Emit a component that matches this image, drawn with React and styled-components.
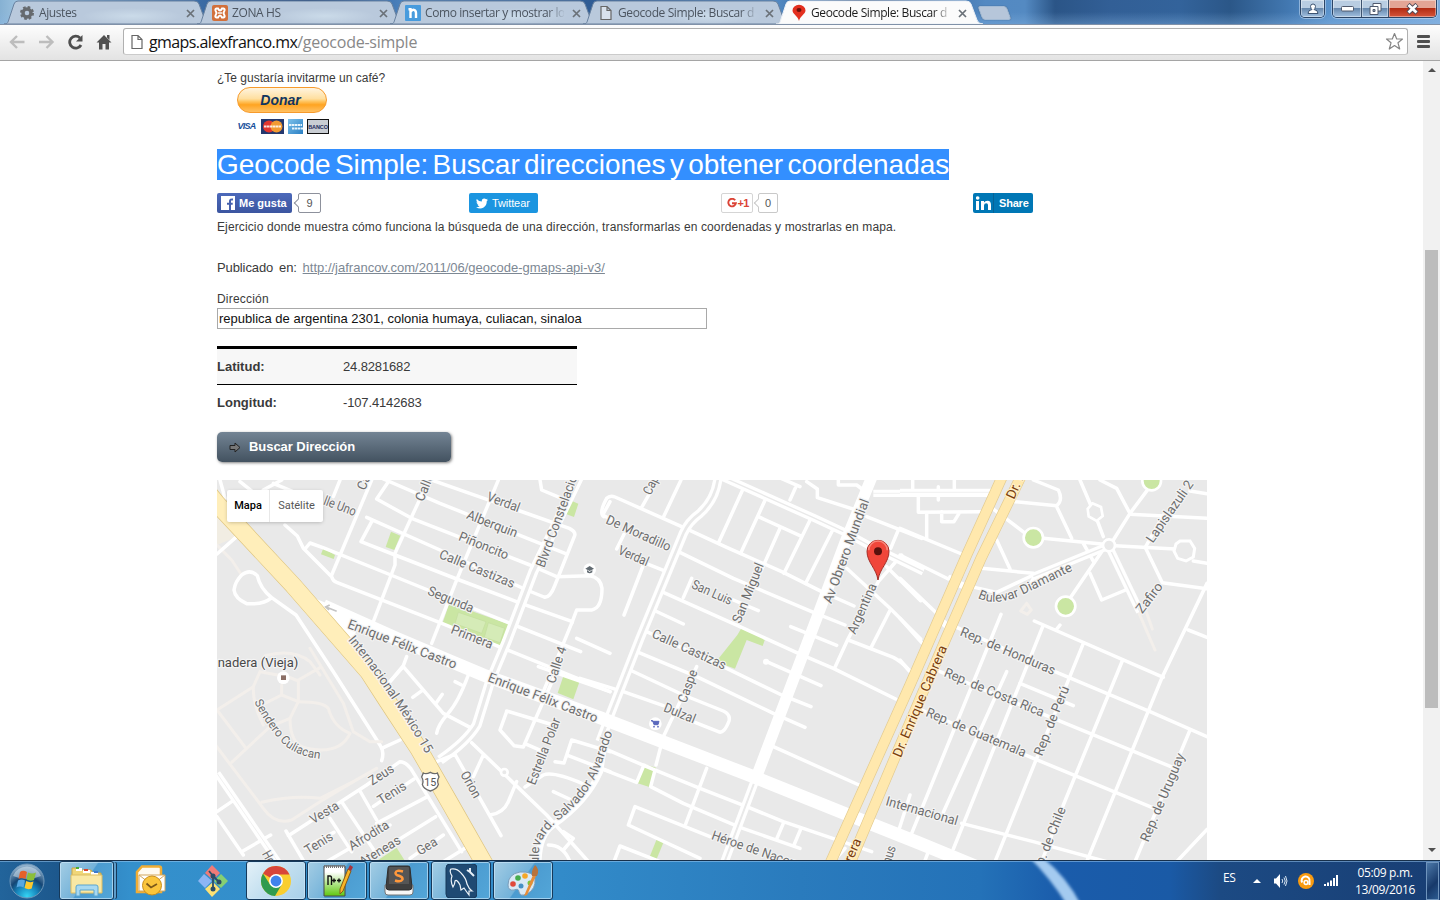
import React from "react";
import styled, { createGlobalStyle } from "styled-components";

const Global = createGlobalStyle`
  * { box-sizing: border-box; }
  html, body { margin: 0; height: 100%; overflow: hidden; background: #fff; }
  svg { display: block; flex: none; }
`;

const ui = '"Open Sans", "Noto Sans", sans-serif';
const arial = '"Liberation Sans", Arial, sans-serif';

const Screen = styled.div`
  width: 1440px;
  height: 900px;
  display: flex;
  flex-direction: column;
  overflow: hidden;
  background: #fff;
`;

/* ---------- browser frame ---------- */

const TabStrip = styled.div`
  height: 24px;
  flex: none;
  display: flex;
  padding-left: 4px;
  background:
    linear-gradient(180deg, transparent 50%, rgba(140, 185, 230, 0.35)),
    linear-gradient(90deg, #86b1d3 0, #9fc4e0 20px, #3c6ca5 200px, #1e4379 310px, #4a80bb 400px,
      #2f5c94 590px, #5187c0 780px, #1d4172 860px, #5389c2 985px, #548ac2 1025px, #2b5587 1055px,
      #325f96 1110px, #33639b 1180px, #2b5788 1230px, #4379b2 1290px, #5b93cc 1330px, #7cabdc 1440px);
`;

const TabBox = styled.div`
  width: 207px;
  height: 24px;
  margin-right: -14px;
  display: grid;
  flex: none;
  position: relative;
  z-index: ${(p) => (p.$active ? 2 : 1)};
  > * { grid-area: 1 / 1; }
`;

const TabContent = styled.div`
  display: flex;
  align-items: center;
  padding: 2px 16px 0 15px;
  color: ${(p) => (p.$active ? "#1c1c1c" : "#4c5560")};
  > svg:last-child { margin-left: 8px; }
`;

const TabTitle = styled.span`
  flex: 1;
  width: 0;
  margin-left: 4px;
  overflow: hidden;
  white-space: nowrap;
  font: 12px/16px ${ui};
  letter-spacing: -0.4px;
  mask-image: linear-gradient(90deg, #000 88%, transparent 101%);
`;

const NewTab = styled.div`
  width: 29px;
  height: 14px;
  margin: 6px 0 0 11px;
  transform: skewX(20deg);
  border: 1px solid #a3bbd5;
  border-radius: 3px;
  background: #b6c6da;
  box-shadow: 0 0 1px #28486d;
`;

const WindowControls = styled.div`
  display: flex;
  margin-left: auto;
  padding-right: 3px;
  height: 18px;
`;

const ControlGroup = styled.div`
  display: flex;
  height: 18px;
  margin-left: 7px;
  overflow: hidden;
  border: 1px solid #2c4566;
  border-top: 0;
  border-radius: 0 0 5px 5px;
  box-shadow: 0 0 0 1px rgba(200, 222, 245, 0.55);
`;

const Control = styled.div`
  width: ${(p) => p.$w}px;
  display: flex;
  justify-content: center;
  align-items: center;
  border-left: ${(p) => (p.$first ? 0 : 1)}px solid #3d536f;
  box-shadow: inset 0 0 0 1px rgba(255, 255, 255, 0.4);
  background: ${(p) =>
    p.$close
      ? "linear-gradient(#e3a595 0 45%, #b32c13 50%, #d5553b)"
      : "linear-gradient(#b9cde2 0 45%, #6788ad 50%, #a1c0e0)"};
`;

const Toolbar = styled.div`
  height: 37px;
  flex: none;
  display: flex;
  align-items: center;
  padding: 0 9px 2px 9px;
  border-top: 1px solid #8091a8;
  border-bottom: 1px solid #a5a5a5;
  background: linear-gradient(#fdfdfd, #e3e3e3);
`;

const NavIcons = styled.div`
  display: flex;
  width: 114px;
  gap: 12px;
`;

const AddressBar = styled.div`
  flex: 1;
  height: 27px;
  display: flex;
  align-items: center;
  padding: 0 3px 0 5px;
  border: 1px solid #b0b0b0;
  border-bottom-color: #cbcbcb;
  border-radius: 3px;
  background: #fff;
`;

const Url = styled.span`
  flex: 1;
  margin: 1px 0 0 4px;
  font: 16px/22px ${ui};
  letter-spacing: -0.25px;
  color: #888;
  b { font-weight: 400; color: #111; letter-spacing: -0.6px; }
`;

const MenuIcon = styled.div`
  width: 13px;
  height: 13px;
  margin-left: 9px;
  margin-right: 1px;
  display: flex;
  flex-direction: column;
  justify-content: space-between;
  i { height: 3px; border-radius: 1px; background: #505050; }
`;

/* ---------- page ---------- */

const Viewport = styled.div`
  flex: 1;
  min-height: 0;
  display: flex;
`;

const Page = styled.main`
  width: 1423px;
  padding-left: 217px;
  overflow: hidden;
  font: 12px/18px ${arial};
  color: #3a3a3a;
`;

const Scrollbar = styled.div`
  width: 17px;
  display: flex;
  flex-direction: column;
  align-items: center;
  background: #f1f1f1;
`;

const ScrollArrow = styled.i`
  border: 4px solid transparent;
  border-top: 0;
  border-bottom: 4px solid #505050;
  margin-top: 7px;
  transform: ${(p) => (p.$down ? "rotate(180deg)" : "none")};
`;

const Thumb = styled.div`
  width: 13px;
  height: 458px;
  margin: 178px 0 133px;
  background: #bcbcbc;
`;

const Invite = styled.p`
  margin: 8px 0 0;
`;

const Donate = styled.div`
  width: 90px;
  height: 26px;
  margin-left: 20px;
  border: 1px solid #f79a2b;
  border-radius: 13px;
  background: linear-gradient(#fff4df 0, #ffdf9f 45%, #ffc765 55%, #ffa421 70%, #ffc163 100%);
  font: italic bold 14px/25px ${arial};
  text-align: center;
  padding-right: 3px;
  color: #12355f;
`;

const Cards = styled.div`
  display: flex;
  gap: 4px;
  margin: 6px 0 0 19px;
  height: 15px;
`;

const Card = styled.div`
  width: ${(p) => p.$w}px;
  height: 15px;
  display: flex;
  align-items: center;
  justify-content: center;
  background: ${(p) => p.$bg || "none"};
  border: ${(p) => p.$border || 0};
  font: ${(p) => p.$font} ${arial};
  letter-spacing: ${(p) => p.$track || 0};
  color: ${(p) => p.$fg};
  white-space: nowrap;
`;

const Title = styled.h1`
  margin: 15px 0 0;
  height: 31px;
  font: 28px/31px ${arial};
  word-spacing: -3.5px;
  color: #fff;
  span { display: inline-block; height: 31px; background: #338fff; white-space: nowrap; }
`;

const Social = styled.div`
  display: grid;
  grid-template-columns: repeat(4, 252px);
  height: 20px;
  margin-top: 13px;
`;

const SocialItem = styled.div`
  display: flex;
`;

const ShareButton = styled.div`
  height: 20px;
  width: ${(p) => p.$w}px;
  display: flex;
  align-items: center;
  gap: ${(p) => p.$gap || 4}px;
  padding-left: ${(p) => p.$pad}px;
  border: ${(p) => p.$border || 0};
  border-radius: 2px;
  background: ${(p) => p.$bg};
  color: ${(p) => p.$fg || "#fff"};
  font: ${(p) => p.$weight || "bold"} 11px/20px ${arial};
  letter-spacing: ${(p) => p.$track || 0};
  white-space: nowrap;
`;

const Count = styled.div`
  position: relative;
  width: ${(p) => p.$w}px;
  height: 20px;
  margin-left: ${(p) => p.$gap || 6}px;
  border: 1px solid ${(p) => p.$line};
  border-radius: 2px;
  font: 11px/18px ${arial};
  text-align: center;
  color: #555;
  &::before {
    content: "";
    position: absolute;
    left: -4px;
    top: 6px;
    width: 5px;
    height: 5px;
    border: solid ${(p) => p.$line};
    border-width: 0 0 1px 1px;
    background: #fff;
    transform: rotate(45deg);
  }
`;

const Description = styled.p`
  margin: 5px 0 0;
  letter-spacing: 0.12px;
`;

const Published = styled.p`
  margin: 22px 0 0;
  font-size: 13px;
  line-height: 20px;
  word-spacing: 2.3px;
  letter-spacing: -0.1px;
  a { color: #7d8894; text-decoration: underline; letter-spacing: 0; }
`;

const Label = styled.label`
  display: block;
  height: 18px;
  margin-top: 12px;
  letter-spacing: 0.2px;
`;

const AddressInput = styled.div`
  width: 490px;
  height: 21px;
  border: 1px solid #a9a9a9;
  padding-left: 1px;
  font: 13px/19px ${arial};
  color: #111;
`;

const Coords = styled.dl`
  width: 360px;
  margin: 17px 0 0;
  border-top: 3px solid #000;
  font-size: 13px;
`;

const CoordRow = styled.div`
  display: flex;
  align-items: center;
  height: 36px;
  background: ${(p) => (p.$shade ? "#f7f7f7" : "#fff")};
  border-bottom: ${(p) => (p.$shade ? 1 : 0)}px solid #000;
  dt { width: 126px; font-weight: bold; }
  dd { margin: 0; letter-spacing: -0.14px; }
`;

const SearchButton = styled.div`
  display: flex;
  align-items: center;
  gap: 8px;
  width: 234px;
  height: 30px;
  margin-top: 11px;
  padding-left: 12px;
  border-radius: 5px;
  background: linear-gradient(#738494, #435260);
  box-shadow: 1px 1px 3px rgba(0, 0, 0, 0.5);
  color: #fff;
  font: bold 13px/30px ${arial};
  letter-spacing: -0.05px;
`;

const MapBox = styled.div`
  position: relative;
  width: 990px;
  height: 380px;
  margin-top: 18px;
`;

const MapSwitch = styled.div`
  position: absolute;
  left: 10px;
  top: 10px;
  display: flex;
  height: 32px;
  border-radius: 2px;
  background: #fff;
  box-shadow: 0 1px 4px -1px rgba(0, 0, 0, 0.3);
  font: 11px/31px Roboto, sans-serif;
`;

const MapMode = styled.span`
  width: ${(p) => p.$w}px;
  text-align: center;
  color: ${(p) => (p.$on ? "#000" : "#565656")};
  font-weight: ${(p) => (p.$on ? 500 : 400)};
  border-right: ${(p) => (p.$on ? 1 : 0)}px solid #e8e8e8;
`;

/* ---------- taskbar ---------- */

const Taskbar = styled.footer`
  height: 40px;
  flex: none;
  display: flex;
  border-top: 1px solid #17304b;
  box-shadow: inset 0 1px 0 rgba(160, 205, 245, 0.5);
  background:
    linear-gradient(90deg, #22649b 0, #1d588d 58px, #2e80bd 85px, #3490cc 130px, #328bc9 560px,
      #2a7bbd 800px, #2472b8 980px, #1a5cab 1060px, #1a5aa6 1170px, #1c4a83 1220px, #183e74 1440px);
`;

const TaskItem = styled.div`
  width: ${(p) => p.$w}px;
  height: 39px;
  margin-left: ${(p) => p.$ml || 0}px;
  flex: none;
  display: flex;
  align-items: center;
  justify-content: center;
  ${(p) =>
    p.$open &&
    `border: 1px solid #16395a; border-radius: 3px;
     box-shadow: inset 0 0 0 1px rgba(205,232,250,.65)${p.$stack ? ", 3px 0 0 -1px #5d9dcb, 4px 0 0 -1px #16395a" : ""};
     background: ${p.$active
       ? "linear-gradient(135deg, #e4f1f8, #c2dfef 50%, #a8d0e9)"
       : "linear-gradient(125deg, #a4cde4 0, #73b2d9 48%, #4b9bd0 50%, #53a6d8)"};`}
`;

const Streak = styled.div`
  flex: 1;
  display: flex;
  padding-left: 450px;
  overflow: hidden;
`;

const Tray = styled.div`
  display: flex;
  align-items: center;
  color: #fff;
  font: 12px/17px ${ui};
  letter-spacing: -0.35px;
`;

const Lang = styled.span`
  width: 28px;
  margin-top: -6px;
`;

const TrayIcons = styled.div`
  display: flex;
  align-items: center;
  gap: 9px;
  width: 99px;
`;

const Clock = styled.div`
  width: 72px;
  text-align: center;
  white-space: nowrap;
  margin: 0 1px 0 -1px;
`;

const ShowDesktop = styled.div`
  width: 13px;
  height: 38px;
  margin: 1px 1px 0 4px;
  border: 1px solid #6f94bd;
  background: linear-gradient(135deg, #4c78a8, #17396a 60%, #2b5a90);
`;

/* ---------- small icons ---------- */

const Close = () => (
  <svg width="9" height="9" viewBox="0 0 9 9">
    <path d="M1 1L8 8M8 1L1 8" stroke="#6a7178" strokeWidth="1.7" />
  </svg>
);

const TabShape = ({ active }) => (
  <svg width="207" height="24" viewBox="0 0 207 24">
    <defs>
      <radialGradient id="sheen">
        <stop offset="0" stopColor="#cfdfec" stopOpacity=".8" />
        <stop offset="1" stopColor="#cfdfec" stopOpacity="0" />
      </radialGradient>
    </defs>
    <path
      d="M0 24C4 24 4 22 5 19L10 4Q11 1 14 1H190Q194 1 195 4L201 20Q202 24 207 24Z"
      fill={active ? "#fbfbfb" : "#b9c9dc"}
      stroke={active ? "#e9eef5" : "#68819f"}
      strokeWidth="1"
    />
    {!active && <ellipse cx="128" cy="16" rx="50" ry="8" fill="url(#sheen)" />}
  </svg>
);

const PageIcon = () => (
  <svg width="16" height="16" viewBox="0 0 16 16">
    <path d="M3 1.5H9L13 5.5V14.5H3ZM9 1.5V5.5H13" fill="#fff" fillOpacity=".45" stroke="#666" strokeWidth="1.2" />
  </svg>
);

const tabIcons = {
  gear: (
    <svg width="16" height="16" viewBox="0 0 16 16">
      <circle cx="8" cy="8" r="4" fill="none" stroke="#666a6e" strokeWidth="3.4" />
      <circle cx="8" cy="8" r="5.8" fill="none" stroke="#666a6e" strokeWidth="2.4" strokeDasharray="2.55 2" />
    </svg>
  ),
  xampp: (
    <svg width="16" height="16" viewBox="0 0 16 16">
      <rect width="16" height="16" rx="2" fill="#d2703b" />
      <path d="M4.500 3.500H6Q7 5.500 8 5.500T10 3.500H11.500Q13 4 12.500 5.500L11.500 8L12.500 10.500Q13 12 11.500 12.500H10Q9 10.500 8 10.500T6 12.500H4.500Q3 12 3.500 10.500L4.500 8L3.500 5.500Q3 4 4.500 3.500Z" fill="none" stroke="#fff" strokeWidth="2" />
      <path d="M6 8H10" stroke="#fff" strokeWidth="1.4" />
    </svg>
  ),
  n: (
    <svg width="16" height="16" viewBox="0 0 16 16">
      <rect width="16" height="16" rx="1" fill="#479bdd" />
      <path d="M3.500 4.200H5.500V13M5.500 7Q7 4.300 9 4.800Q11 5.300 11 8V13" stroke="#fff" strokeWidth="2.4" fill="none" />
    </svg>
  ),
  page: <PageIcon />,
  pin: (
    <svg width="16" height="18" viewBox="0 0 16 18">
      <path d="M8 17C7 12 1.5 10 1.5 6.5A6.5 5.8 0 0 1 14.5 6.5C14.5 10 9 12 8 17Z" fill="#e32f1e" />
      <ellipse cx="8" cy="6" rx="2.5" ry="2" fill="#6c120b" />
    </svg>
  ),
};

const Tab = ({ icon, title, active }) => (
  <TabBox $active={active}>
    <TabShape active={active} />
    <TabContent $active={active}>
      {tabIcons[icon]}
      <TabTitle>{title}</TabTitle>
      <Close />
    </TabContent>
  </TabBox>
);

/* ---------- map drawing ---------- */

const sectors = [
  {
    at: [0, 0],
    roads: [
      "M30 15L45 70M90 20L140 60M215 15L160 45M190 25L340 88M390 15L370 65M80 185L21 237",
      "M225 150L262 183L280 220L365 305Q368 318 380 322L690 443L880 520L1200 650",
      "M285 222L300 204L345 220L550 303L895 443L1112 530",
      "M485 15L365 300M665 -5L603 130L555 235V270L490 440M865 15L740 315L665 505",
      "M535 20L500 72L605 130L745 185L960 270L1040 305L1140 302Q1172 308 1176 340Q1176 400 1145 405H1100L1085 445",
      "M520 12L690 85L1065 235M665 15L930 108L1078 160Q1098 170 1094 182L1035 330Q1020 370 1002 366L950 345",
      "M470 127L690 225L950 345M485 140L453 200L555 240L740 312L925 382L1087 440L1050 530L1000 650",
      "M95 300Q120 280 142 302Q150 340 185 368Q160 390 110 386Q75 370 72 345Q75 320 95 300M185 368L258 420L370 590L510 810Q524 830 515 857",
      "M990 15L995 45L1050 68M1200 80L1178 120L1215 140M590 545L580 572L540 620",
    ],
    duals: [["M1110 0L970 290L890 500L840 620L800 750Q770 800 690 855", 30]],
    parks: ["M543 170L571 182L553 225L527 216Z", "M340 220L375 240L371 252L333 238Z", "M1077 74L1105 86L1092 126L1066 116Z", "M718 385L897 448L875 514L697 446Z"],
    paths: ["M21 210L65 255L95 300", "M165 542Q250 520 300 560L330 600"],
  },
  {
    at: [0, 570],
    roads: [
      "M580 5L700 145L780 187M608 97L637 76M680 205Q684 180 712 148Q745 112 775 30M540 50L580 5M680 112L697 88M735 50L755 60",
      "M570 225L515 250M235 512L470 360L570 290Q586 290 602 310L755 560M395 410L495 560M450 378L500 465M360 460L425 560M228 498L282 590",
      "M490 424L612 342M500 475L648 397M540 540L677 455M285 548L372 502M700 510L600 580M765 550L700 590M350 590L540 480",
      "M21 440L65 410M95 560L182 510M21 455L100 570M680 290L735 268L873 512M785 233L1010 450L1140 595M820 270L790 335M920 350L895 410Q880 445 840 450",
      "M945 366L1000 330Q1030 318 1120 357M890 140L870 195L912 242L940 246L975 165M890 138L1030 180M1040 15L1055 -20M1035 30L975 165M950 238L1000 260M1200 -35L1100 -80M985 5L1200 80",
      "M1200 260L1085 225L1062 294L1035 290M1075 272L1200 320M1030 380L1078 402M1060 500L1090 520L1060 555M1015 540Q1060 540 1080 590",
    ],
    duals: [["M21 325L210 600", 22]],
    boulevard: "M1190 190L1170 320Q1130 410 1030 480Q985 510 985 600",
    parks: ["M1062 28L1110 46L1090 103L1043 84Z", "M560 548L585 588H500Z"],
    paths: [
      "M150 20L130 65L21 135L108 250M130 65Q128 120 160 180M65 292L180 185L240 160L265 110V48L235 36L150 20M265 45L330 8M215 60V90L265 110M215 90L165 115",
      "M240 160Q240 240 290 250Q390 270 420 205Q370 185 355 130Q340 110 265 110M300 -50L400 115L430 200L480 230H515M155 412Q250 390 330 400L430 350L500 310",
      "M-10 205L160 430Q195 480 245 465L330 410L430 350",
    ],
  },
  {
    at: [1170, 0],
    roads: [
      "M12 125Q-5 115 20 70Q30 60 45 66L250 157L380 217L550 292L665 350L762 393M172 15L125 97M243 15L190 127",
      "M50 222L72 178M130 270L72 420M130 262L192 287M430 40L355 205M500 65L422 235M475 125L600 182M540 160L482 290M635 125L552 295M698 165L617 325",
      "M235 230L400 310L635 410L735 450M275 310L250 368M185 350L420 455L595 535L700 580L887 672M160 405L250 447M140 470L380 580L545 660L633 695",
      "M110 530L290 605L520 715L615 757M90 585L250 660L370 708Q392 718 387 738Q372 778 355 770L285 742M-60 610L70 650L190 692M290 575L190 785L168 870",
      "M400 375L475 407M572 455L710 511M500 560L663 632M520 815L777 930M895 165L872 220M905 240L835 320L745 490L705 577",
      "M740 280L870 400L962 492M872 402L812 520M745 495L880 547Q905 560 927 585M860 275L962 377M800 125L965 190M620 20L652 42V68L790 112M590 30L570 75M520 0L600 35",
      "M0 815L140 875L300 940L440 995L550 1040L815 1130M-20 872L110 922L132 870L165 885L152 935L250 985L420 1057L600 1120M320 880L257 1047",
      "M330 1085L105 995L85 1050L300 1150M550 1045L530 1092M603 1060L582 1110M60 1113L42 1160M60 1113L180 1160M735 1120L700 1160M715 15V30H770L790 45",
    ],
    duals: [["M355 0Q350 70 300 115Q265 140 250 175L120 490L30 720L0 800", 28], ["M365 5L640 128L735 172L805 210L970 290", 24], ["M462 925L370 1170", 26], ["M820 55H1175", 22]],
    wide: "M820 -5L740 190L650 430L462 925",
    parks: ["M424 460L496 490L488 513L440 495L405 581L348 560L412 480Z", "M135 868L168 878L148 936L113 925Z", "M170 1093L190 1103L170 1152L149 1145Z"],
    paths: [],
  },
  {
    at: [2070, 0],
    roads: [
      "M270 95L372 172M430 190L612 208M345 80L470 92Q490 75 475 45L400 15M470 95L515 190M550 205L582 262M290 195L330 282M245 280L400 295",
      "M150 305L170 325L290 352L400 300M640 195L690 115L750 35M610 185L593 140M572 90L540 15M645 212L825 222M880 258L921 265M605 230L510 370",
      "M570 295L605 375L677 345M737 220L787 323L921 341M737 215L790 120M690 118L921 130M687 110L650 40L600 15M870 48L921 56M405 300L380 350",
      "M921 325L785 610L560 1160M865 465L921 487M403 438L790 607M303 418L35 1075M320 590L130 1012M430 450L360 625L160 1122M550 505L410 850L285 1160",
      "M668 555L490 990L425 1160M870 765L705 1160M165 455L465 590L750 710L921 785M360 625L520 692M120 590L440 722L820 878M65 705L400 850L770 1003",
      "M185 1045L400 1100L620 1160M921 1063L830 1160M0 160L185 237M0 240L145 312M0 310L110 415M0 430L65 503M0 555L28 588M85 1130L70 1170M480 450L468 465",
      "M55 50V112L240 110M80 112V190M125 110V140H162L177 115M115 35V75M163 15V45M38 15V45M30 960L-5 1070",
    ],
    duals: [["M0 52H275", 22], ["M400 305L620 215", 24], ["M627 215L720 410", 24]],
    parks: [],
    paths: ["M380 385L362 408L382 418L394 405L380 385M715 410L765 525M735 400L757 462"],
  },
];

const AVENUE = "M340 392L560 490L700 550L820 600L1170 728L1630 905L1910 1018L2130 1105L2300 1175";
const HIGHWAY = "M0 60L21 86L250 332L475 590L530 675L625 820L720 985L828 1175";
const CABRERA_W = "M2379 0L2270 240L2100 630L1858 1170";
const CABRERA_E = "M2435 0L2313 250L2208 490L2075 800L1918 1170";

const labels = [
  ["lle Uno", 338, 88, 438, 126], ["Verdal", 828, 76, 930, 114], ["Alberquin", 767, 130, 922, 190],
  ["Piñoncito", 743, 195, 895, 256], ["Calle Castizas", 685, 248, 913, 342], ["Segunda", 650, 358, 790, 416],
  ["Primera", 720, 474, 848, 524], ["Enrique Félix Castro", 410, 458, 740, 584], ["Calle", 640, 82, 672, 2],
  ["Calle", 465, 48, 497, -32], ["Blvrd Constelaciones", 1003, 280, 1123, -50], ["Calle 4", 1034, 628, 1070, 520],
  ["Zeus", 487, 932, 555, 888], ["Tenis", 513, 990, 592, 940], ["Vesta", 310, 1048, 390, 1000],
  ["Tenis", 294, 1140, 372, 1092], ["Afrodita", 426, 1127, 540, 1057], ["Ateneas", 458, 1175, 575, 1103],
  ["Gea", 630, 1142, 685, 1108], ["Hera", 155, 1136, 190, 1200], ["Orion", 750, 898, 795, 978],
  ["Estrella Polar", 975, 932, 1052, 735], ["Enrique Félix Castro", 831, 618, 1163, 745],
  ["Capri", 1322, 62, 1356, -10], ["De Moradillo", 1185, 144, 1381, 232], ["Verdal", 1222, 236, 1315, 276],
  ["San Luis", 1442, 338, 1565, 393], ["San Miguel", 1591, 447, 1662, 270], ["Calle Castizas", 1323, 486, 1547, 587],
  ["Caspe", 1428, 686, 1463, 590], ["Dulzal", 1358, 708, 1456, 748], ["Av Obrero Mundial", 1864, 388, 1978, 78],
  ["Argentina", 1936, 480, 2001, 332], ["Héroe de Nacozari", 1502, 1092, 1797, 1194], ["Internacional", 2025, 990, 2245, 1053],
  ["Janus", 2030, 1205, 2058, 1117], ["Lapislazuli 2", 2828, 206, 2952, 28], ["Zafiro", 2797, 418, 2860, 335],
  ["Rep. de Honduras", 2248, 480, 2535, 603], ["Rep. de Costa Rica", 2200, 603, 2501, 728],
  ["Rep. de Guatemala", 2145, 722, 2447, 849], ["Rep. de Perú", 2496, 845, 2578, 640],
  ["Rep. de Chile", 2484, 1214, 2568, 1002], ["Rep. de Uruguay", 2815, 1103, 2925, 842],
];

const brownLabels = [
  ["Dr. Enrique Cabrera", 2072, 850, 2212, 518], ["Dr. Enrique Cabrera", 1812, 1428, 1955, 1097], ["Dr. Enrique", 2412, 75, 2494, -108],
];

const curved = [
  ["intl", "Internacional México 15", "M413 495Q480 575 530 650Q590 735 648 838", 415],
  ["sendero", "Sendero Culiacan", "M133 680Q170 755 225 812Q275 850 342 852", 275],
  ["alvarado", "Boulevard. Salvador Alvarado", "M985 1215L987 1120Q1000 1070 1060 1025Q1150 950 1180 850L1206 776", 515],
  ["diamante", "Bulevar Diamante", "M2303 368Q2350 395 2430 363L2592 285", 308],
];

const StreetText = styled.text`
  font-family: Roboto, sans-serif;
  font-size: ${(p) => p.$size || 40}px;
  fill: ${(p) => p.$fill || "#6e6e6e"};
  stroke: ${(p) => p.$halo || "#f4f4f4"};
  stroke-width: 7px;
  stroke-linejoin: round;
  paint-order: stroke;
`;

const StreetLabel = ({ data, brown }) => {
  const [text, x1, y1, x2, y2] = data;
  const angle = (Math.atan2(y2 - y1, x2 - x1) * 180) / Math.PI;
  return (
    <StreetText
      $fill={brown ? "#7a3e0d" : undefined}
      $halo={brown ? "#ffefc9" : undefined}
      transform={`translate(${x1} ${y1}) rotate(${angle})`}
      textLength={Math.hypot(x2 - x1, y2 - y1) - (y2 > y1 ? 6 : 0)}
      lengthAdjust="spacingAndGlyphs"
    >
      {text}
    </StreetText>
  );
};

const CityMap = () => (
  <svg width="990" height="380" viewBox="21 15 2970 1140">
    <rect x="21" y="15" width="2970" height="1140" fill="#e9e9e9" />
    <path d="M21 120L80 185L21 210Z" fill="#f1ede3" />
    {sectors.map((s, i) => (
      <g key={i} transform={`translate(${s.at[0]} ${s.at[1]})`} fill="none" stroke="#fff" strokeWidth="10.5" strokeLinejoin="round" strokeLinecap="round">
        {s.parks.map((d) => <path key={d} d={d} fill="#cae6a3" stroke="none" />)}
        {s.paths.map((d) => <path key={d} d={d} stroke="#f3efeb" strokeWidth="9" />)}
        {s.roads.map((d) => <path key={d} d={d} />)}
        {s.boulevard && <path d={s.boulevard} strokeWidth="19" />}
        {s.duals.map(([d, w]) => (
          <g key={d} strokeLinecap="butt">
            <path d={d} strokeWidth={w} />
            <path d={d} stroke="#e9e9e9" strokeWidth={w - 20} />
          </g>
        ))}
        {s.wide && <path d={s.wide} strokeWidth="34" strokeLinecap="butt" />}
      </g>
    ))}
    <g fill="#d5ebb7" stroke="#c3dd9e" strokeWidth="2">
      <path d="M745 412L828 440L815 475L735 446Z" />
      <path d="M835 443L884 460L870 503L823 487Z" />
    </g>
    <g fill="#e9e9e9" stroke="#fff" strokeWidth="8">
      <circle cx="883" cy="892" r="10" />
      <circle cx="2697" cy="211" r="18" />
      <path d="M2647 85L2673 96L2678 123L2660 138L2636 124L2633 102Z" />
      <path d="M2910 198L2940 198L2954 220L2950 246L2928 258L2903 250L2892 228L2898 207Z" strokeWidth="9" />
    </g>
    <circle cx="1668" cy="560" r="9" fill="#fff" />
    <g fill="#cae6a3" stroke="#fff" strokeWidth="8">
      <circle cx="2470" cy="188" r="29" />
      <circle cx="2567" cy="394" r="29" />
      <circle cx="2825" cy="18" r="28" />
    </g>
    <path d={AVENUE} fill="none" stroke="#fff" strokeWidth="39" />
    <path d="M310 368L450 425L430 500Z" fill="#fff" />
    <path d="M2240 325L2290 342M2190 435L2220 460" stroke="#fff" strokeWidth="20" />
    <path d="M380 409L350 397M359 390L347 396L357 405" fill="none" stroke="#c4c4c4" strokeWidth="5" />
    <path d={HIGHWAY} fill="none" stroke="#dfc57f" strokeWidth="54" />
    <path d={HIGHWAY} fill="none" stroke="#ffeeba" strokeWidth="50" />
    {[CABRERA_W, CABRERA_E].map((d) => (
      <g key={d} fill="none">
        <path d={d} stroke="#e3cb8f" strokeWidth="33" />
        <path d={d} stroke="#ffe8ad" strokeWidth="29" />
      </g>
    ))}
    {labels.map((l, i) => <StreetLabel key={i} data={l} />)}
    {brownLabels.map((l, i) => <StreetLabel key={i} data={l} brown />)}
    {curved.map(([id, text, d, len]) => (
      <React.Fragment key={id}>
        <path id={id} d={d} fill="none" />
        <StreetText $size={id === "sendero" ? 36 : 39}>
          <textPath href={`#${id}`} textLength={len} lengthAdjust="spacingAndGlyphs">{text}</textPath>
        </StreetText>
      </React.Fragment>
    ))}
    <StreetText x="23" y="577" $fill="#484848" textLength="242" lengthAdjust="spacingAndGlyphs">nadera (Vieja)</StreetText>
    <circle cx="220" cy="608" r="19" fill="#fff" />
    <path d="M213 601H228V615H213Z" fill="#8c7067" />
    <circle cx="1139" cy="284" r="19" fill="#fff" />
    <path d="M1126 281L1139 273L1152 281L1139 288ZM1131 285V292Q1139 298 1147 292V285L1139 291Z" fill="#626b72" />
    <circle cx="1336" cy="746" r="19" fill="#fff" />
    <path d="M1323 737H1328L1332 749H1344L1347 739H1329Z" fill="#5b69bd" stroke="#5b69bd" strokeWidth="3" />
    <circle cx="1332" cy="755" r="2.6" fill="#5b69bd" />
    <circle cx="1344" cy="755" r="2.6" fill="#5b69bd" />
    <path d="M640 894Q648 899 661 892Q674 899 682 894L687 906Q680 918 685 928Q682 941 661 948Q640 941 637 928Q642 918 635 906Z" fill="#fff" stroke="#6b6b6b" strokeWidth="4" />
    <StreetText $size={32} x="661" y="932" textAnchor="middle" $halo="#fff" $fill="#555">15</StreetText>
    <path d="M2004 315C1999 280 1971 262 1971 229A33 33 0 0 1 2037 229C2037 262 2009 280 2004 315Z" fill="#f0463a" stroke="#a52b24" strokeWidth="3" />
    <path d="M1976 226A28 28 0 0 1 2032 226" fill="none" stroke="#f88579" strokeWidth="5" />
    <circle cx="2004" cy="229" r="12" fill="#57110d" />
  </svg>
);

/* ---------- taskbar icons ---------- */

const Orb = () => (
  <svg width="38" height="38" viewBox="0 0 38 38">
    <defs>
      <radialGradient id="orb" cx=".5" cy=".95" r=".9">
        <stop offset="0" stopColor="#35d5f4" /><stop offset=".35" stopColor="#1786bd" />
        <stop offset=".6" stopColor="#144574" /><stop offset="1" stopColor="#8fb0cc" />
      </radialGradient>
    </defs>
    <circle cx="19" cy="19" r="17" fill="url(#orb)" stroke="#6f97b9" strokeWidth="1" />
    <path d="M5 14A15 15 0 0 1 33 14Q19 20 5 14Z" fill="#dbe9f4" opacity=".5" />
    <path d="M12 10Q15 7.500 19 10L17.500 17Q14 15 10.500 17Z" fill="#e5602a" />
    <path d="M20 10.500Q24 12.500 28 10.500L26 18Q22 19.500 18.500 17.500Z" fill="#8abf3a" />
    <path d="M10 18.500Q13.500 16.500 17 18.500L15.500 25.500Q12 23.500 8.500 25.500Z" fill="#56a7e2" />
    <path d="M18.200 19Q21.500 21 25.500 19.500L23.700 26.500Q20 28 16.500 26Z" fill="#fcc92e" />
  </svg>
);

const Folder = () => (
  <svg width="34" height="32" viewBox="0 0 34 32">
    <path d="M2 3H9L11 5H21L23 8H31V27H2Z" fill="#f0d678" stroke="#c9a546" />
    <path d="M6 3H12V6H6ZM13 5H20V8H13ZM21 7H28V10H21Z" fill="#fff" />
    <path d="M6 2H9V4H6Z" fill="#4cae35" /><path d="M14 4H18V6H14Z" fill="#d9412b" /><path d="M24 6H28V8H24Z" fill="#3b7ad0" />
    <path d="M1 10H32V28H1Z" fill="#f9e8a4" stroke="#dcbd62" />
    <path d="M6 31V22Q6 20 8 20H26Q28 20 28 22V31H24V25H10V31Z" fill="#a7d9f2" stroke="#5aa5cf" />
  </svg>
);

const Outlook = () => (
  <svg width="32" height="32" viewBox="0 0 32 32">
    <path d="M7 1.500H24Q26 1.500 26 3.500V27H2V7Z" fill="#fffaf0" stroke="#f0ad35" strokeWidth="2.500" />
    <path d="M4 10H30V26H4Z" fill="#fff" stroke="#d3a75d" /><path d="M4 10L17 20L30 10" fill="none" stroke="#d3a75d" />
    <circle cx="17" cy="20.500" r="9.500" fill="#fbc53c" stroke="#c98e1c" />
    <path d="M11.500 18.500L16 22.500L22 19" fill="none" stroke="#7b581a" strokeWidth="1.700" />
  </svg>
);

const Git = () => (
  <svg width="32" height="34" viewBox="0 0 32 34">
    <path d="M15 1L23 9L16 16L8 9Z" fill="#f07b78" /><path d="M24 10L31 17L24 24L17 17Z" fill="#86cf73" />
    <path d="M7 10L15 17L8 24L1 17Z" fill="#8cb5f4" /><path d="M16 18L23 25L15 33L8 25Z" fill="#fbe175" />
    <path d="M12 7L16 12V25M16 12L22 18" stroke="#2b4d68" strokeWidth="1.800" fill="none" />
    <circle cx="16" cy="12" r="2.500" fill="#2b4d68" /><circle cx="22" cy="18" r="2.500" fill="#2b4d68" /><circle cx="16" cy="25" r="2.500" fill="#2b4d68" />
  </svg>
);

const Chrome = () => (
  <svg width="32" height="34" viewBox="0 0 32 34">
    <g transform="translate(0 1)">
      <circle cx="16" cy="16" r="15" fill="#f9ce2f" />
      <path d="M16 16L3 8.500A15 15 0 0 1 29.500 9.500H16Z" fill="#d8453a" />
      <path d="M3 8.500A15 15 0 0 0 15 31L21.800 19.500L16 16L10 19.500Z" fill="#2f9b4e" />
      <circle cx="16" cy="16" r="6.900" fill="#fff" /><circle cx="16" cy="16" r="5.400" fill="#4083ec" />
    </g>
  </svg>
);

const Notepad = () => (
  <svg width="34" height="34" viewBox="0 0 34 34">
    <defs><linearGradient id="pad" x2="0" y2="1"><stop offset=".2" stopColor="#fff" /><stop offset=".95" stopColor="#68cb1d" /></linearGradient></defs>
    <path d="M4 2H25V32H4Z" fill="url(#pad)" stroke="#484848" />
    <path d="M4 2.500H25" stroke="#777" strokeWidth="3" strokeDasharray="1 1" />
    <path d="M8 21V12H10Q11.500 12 11.500 14V21M12 16.500H16M14 14.500V18.500M17 16.500H21M19 14.500V18.500" fill="none" stroke="#111" strokeWidth="1.400" />
    <path d="M28 5L31 7L23 27L20 30L20 25Z" fill="#f8b527" stroke="#855a17" /><path d="M28 5L31 7L33 3L30 1Z" fill="#a8323b" />
  </svg>
);

const Sublime = () => (
  <svg width="30" height="32" viewBox="0 0 30 32">
    <path d="M1 20V27Q1 30 4 30H26Q29 30 29 27V20Z" fill="#f6f6f6" stroke="#777" />
    <path d="M4 3Q4 1 6 1H24Q26 1 26 3L28 22Q28 25 25 25H5Q2 25 2 22Z" fill="#3f3f3f" stroke="#2e2e2e" />
    <path d="M5 3Q5 2 6 2H24Q25 2 25 3V19H5Z" fill="#555" />
    <path d="M19 6.500Q12 4.500 11.500 8Q11.500 10 15 10.800Q19 12 18.500 14.500Q17 17.500 11 15.500" fill="none" stroke="#ff983c" strokeWidth="2.500" />
  </svg>
);

const Dolphin = () => (
  <svg width="32" height="34" viewBox="0 0 32 34">
    <rect x="1" y="0" width="31" height="34" rx="4" fill="#1f4a73" stroke="#17385a" />
    <path d="M8 23Q5 17 7 12Q4 7 6 5Q12 4 16 9Q21 14 22 20Q24 25 27 27L24 27L24 31Q21 27 19 24L16 26L15 21Q12 15 10 17Q10 20 8 23Z" fill="none" stroke="#eef4f9" strokeWidth="1.200" />
    <path d="M22 6L25 8L29 12M25 8V4" stroke="#e7f0f8" strokeWidth="2" fill="none" />
  </svg>
);

const Paint = () => (
  <svg width="34" height="34" viewBox="0 0 34 34">
    <path d="M2 21Q2 10 14 8Q27 7 29 15Q30 25 21 30Q14 33 13 28Q13 24 8 26Q2 27 2 21Z" fill="#d9e9f5" stroke="#7b9dba" />
    <circle cx="7" cy="20" r="2.800" fill="#e0493b" /><circle cx="12" cy="14" r="2.800" fill="#47ac4d" /><circle cx="19" cy="12" r="2.800" fill="#f5a728" /><circle cx="15" cy="22" r="2.500" fill="#4690c4" /><circle cx="24" cy="19" r="2.500" fill="#7cc33c" />
    <path d="M27 11L30 12L21 31L18 32Z" fill="#e78d38" /><path d="M29 1Q34 5 31 12H26Q25 7 29 1Z" fill="#b7733b" />
  </svg>
);

const tasks = [
  [Folder, 55, 5, true, false, true], [Outlook, 52, 11], [Git, 52, 10], [Chrome, 60, 7, true, true], [Notepad, 60, 1, true],
  [Sublime, 60, 2, true], [Dolphin, 60, 2, true], [Paint, 60, 2, true],
];

export default function App() {
  return (
    <Screen>
      <Global />
      <TabStrip>
        <Tab icon="gear" title="Ajustes" />
        <Tab icon="xampp" title="ZONA HS" />
        <Tab icon="n" title="Como insertar y mostrar lo" />
        <Tab icon="page" title="Geocode Simple: Buscar d" />
        <Tab icon="pin" title="Geocode Simple: Buscar d" active />
        <NewTab />
        <WindowControls>
          <ControlGroup>
            <Control $w={23} $first>
              <svg width="12" height="12" viewBox="0 0 12 12">
                <path d="M3.500 3.500A2.500 2.500 0 1 1 8.500 3.500Q8 6 7 6.500Q11 7 11 10.500H1Q1 7 5 6.500Q4 6 3.500 3.500Z" fill="#fff" stroke="#3d5473" />
              </svg>
            </Control>
          </ControlGroup>
          <ControlGroup>
            <Control $w={28} $first>
              <svg width="13" height="6" viewBox="0 0 13 6"><rect x=".5" y=".5" width="12" height="4.500" rx="1" fill="#fff" stroke="#505a6e" /></svg>
            </Control>
            <Control $w={27}>
              <svg width="13" height="12" viewBox="0 0 13 12">
                <path d="M4 .5H12V8H4Z" fill="#fff" stroke="#505a6e" /><path d="M1 3.500H9V11.500H1Z" fill="#fff" stroke="#505a6e" /><path d="M4 6.500H6V8.500H4Z" fill="#9ab" stroke="#505a6e" />
              </svg>
            </Control>
            <Control $w={48} $close>
              <svg width="13" height="12" viewBox="0 0 13 12">
                <path d="M2 1.500L11 10M11 1.500L2 10" stroke="#504a58" strokeWidth="4.600" /><path d="M2.500 2L10.500 9.500M10.500 2L2.500 9.500" stroke="#fff" strokeWidth="2.800" />
              </svg>
            </Control>
          </ControlGroup>
        </WindowControls>
      </TabStrip>

      <Toolbar>
        <NavIcons>
          <svg width="16" height="16" viewBox="0 0 16 16"><path d="M15.500 8H2M8 2L2 8L8 14" fill="none" stroke="#bdbdbd" strokeWidth="2.400" /></svg>
          <svg width="18" height="16" viewBox="0 0 18 16"><path d="M2 8H15M9.500 2L15.500 8L9.500 14" fill="none" stroke="#bdbdbd" strokeWidth="2.400" /></svg>
          <svg width="17" height="16" viewBox="0 0 17 16"><path d="M14 11A6 6 0 1 1 13 4" fill="none" stroke="#4f4f4f" strokeWidth="2.800" /><path d="M15.500 1V7.500H9Z" fill="#4f4f4f" /></svg>
          <svg width="16" height="16" viewBox="0 0 16 16"><path d="M8 1L15.500 8.500H13V15.500H9.500V10H6.500V15.500H3V8.500H.5ZM11 1H13.500V6L11 3.500Z" fill="#505050" /></svg>
        </NavIcons>
        <AddressBar>
          <PageIcon />
          <Url><b>gmaps.alexfranco.mx</b>/geocode-simple</Url>
          <svg width="19" height="19" viewBox="0 0 19 19"><path d="M9.500 1.500L11.700 7H17.500L13 10.800L14.700 17L9.500 13.500L4.300 17L6 10.800L1.500 7H7.300Z" fill="#fff" stroke="#858585" strokeWidth="1.200" strokeLinejoin="round" /></svg>
        </AddressBar>
        <MenuIcon><i /><i /><i /></MenuIcon>
      </Toolbar>

      <Viewport>
        <Page>
          <Invite>¿Te gustaría invitarme un café?</Invite>
          <Donate>Donar</Donate>
          <Cards>
            <Card $w={21} $font="italic bold 9px/15px" $track="-0.7px" $fg="#17509b">VISA</Card>
            <Card $w={23} $bg="#24386f">
              <svg width="23" height="15" viewBox="0 0 23 15">
                <circle cx="8" cy="7.500" r="6" fill="#e2352f" /><circle cx="15.500" cy="7.500" r="6" fill="#f29a32" />
                <path d="M3 7.500H20" stroke="#fff" strokeWidth="2.200" strokeDasharray="2.500 .4" opacity=".85" />
              </svg>
            </Card>
            <Card $w={15} $bg="linear-gradient(135deg,#7cc0ea,#2a7fc4)">
              <svg width="15" height="15" viewBox="0 0 15 15"><path d="M1 6H14M4 9.500H15" stroke="#e8f4fc" strokeWidth="2.200" strokeDasharray="2.500 .5" /></svg>
            </Card>
            <Card $w={22} $bg="#c9cdd3" $border="1px solid #111" $font="bold 5.5px/12px" $track="-0.1px" $fg="#1d2a5b">BANCO</Card>
          </Cards>
          <Title><span>Geocode Simple: Buscar direcciones y obtener coordenadas</span></Title>
          <Social>
            <SocialItem>
              <ShareButton $w={75} $pad={4} $bg="linear-gradient(#4c69ba, #3b55a0)">
                <svg width="14" height="14" viewBox="0 0 14 14"><rect width="14" height="14" fill="#fff" /><path d="M9 14V5Q9 3.200 12 3.400M6 7.800H11.700" fill="none" stroke="#4560ad" strokeWidth="2" /></svg>
                Me gusta
              </ShareButton>
              <Count $w={23} $line="#8d919c">9</Count>
            </SocialItem>
            <SocialItem>
              <ShareButton $w={69} $pad={7} $bg="#1b95e0" $weight="normal" $track="-0.1px">
                <svg width="12" height="11" viewBox="0 0 24 20"><path d="M24 2.400Q22.600 3 21.200 3.200Q22.700 2.200 23.300 .5Q21.800 1.400 20.200 1.700A4.900 4.900 0 0 0 11.800 6.200Q5.500 6 1.700 1A4.900 4.900 0 0 0 3.200 7.600Q2 7.500 1 7A4.900 4.900 0 0 0 4.900 11.900Q3.800 12.200 2.700 12A4.900 4.900 0 0 0 7.300 15.400Q4.200 17.800 0 17.400Q8 22 15.200 18Q22 13.500 21.500 5Q23 4 24 2.400Z" fill="#fff" /></svg>
                Twittear
              </ShareButton>
            </SocialItem>
            <SocialItem>
              <ShareButton $w={32} $pad={5} $bg="#fff" $fg="#db4437" $border="1px solid #d5d5d5" $gap={0.5} $track="-0.7px">
                <svg width="10" height="10" viewBox="0 0 10 10"><path d="M8.200 2.300A3.800 3.800 0 1 0 8.900 5.200H5" fill="none" stroke="#db4437" strokeWidth="1.900" /></svg>
                +1
              </ShareButton>
              <Count $w={20} $gap={5} $line="#c9c9c9">0</Count>
            </SocialItem>
            <SocialItem>
              <ShareButton $w={60} $pad={3} $bg="linear-gradient(90deg, #0077b5 20px, #066396 20px 21px, #0077b5 21px)" $gap={7} $track="-0.2px">
                <svg width="16" height="15" viewBox="0 0 16 15"><path d="M0 5H3V14H0ZM5 5H8V6.500Q9 4.700 11.500 4.700Q15 4.700 15 9V14H12V9Q12 7.200 10.300 7.200Q8 7.200 8 9.500V14H5Z" fill="#fff" /><circle cx="1.700" cy="2" r="1.800" fill="#fff" /></svg>
                Share
              </ShareButton>
            </SocialItem>
          </Social>
          <Description>Ejercicio donde muestra cómo funciona la búsqueda de una dirección, transformarlas en coordenadas y mostrarlas en mapa.</Description>
          <Published>Publicado en: <a>http://jafrancov.com/2011/06/geocode-gmaps-api-v3/</a></Published>
          <Label>Dirección</Label>
          <AddressInput>republica de argentina 2301, colonia humaya, culiacan, sinaloa</AddressInput>
          <Coords>
            <CoordRow $shade><dt>Latitud:</dt><dd>24.8281682</dd></CoordRow>
            <CoordRow><dt>Longitud:</dt><dd>-107.4142683</dd></CoordRow>
          </Coords>
          <SearchButton>
            <svg width="12" height="11" viewBox="0 0 12 11"><path d="M1 3.500H6V1L11 5.500L6 10V7.500H1Z" fill="#777" stroke="#222" /></svg>
            Buscar Dirección
          </SearchButton>
          <MapBox>
            <CityMap />
            <MapSwitch>
              <MapMode $w={43} $on>Mapa</MapMode>
              <MapMode $w={53}>Satélite</MapMode>
            </MapSwitch>
          </MapBox>
        </Page>
        <Scrollbar>
          <ScrollArrow />
          <Thumb />
          <ScrollArrow $down />
        </Scrollbar>
      </Viewport>

      <Taskbar>
        <TaskItem $w={54}><Orb /></TaskItem>
        {tasks.map(([Icon, w, ml, open, active, stack], i) => (
          <TaskItem key={i} $w={w} $ml={ml} $open={open} $active={active} $stack={stack}><Icon /></TaskItem>
        ))}
        <Streak>
          <svg width="100" height="39" viewBox="0 0 100 39">
            <defs><filter id="soft"><feGaussianBlur stdDeviation="1.500" /></filter></defs>
            <path d="M26 -4H39Q64 16 78 44H64Q48 18 26 -4Z" fill="#a4cbf0" filter="url(#soft)" />
          </svg>
        </Streak>
        <Tray>
          <Lang>ES</Lang>
          <TrayIcons>
            <svg width="12" height="6" viewBox="0 0 12 6"><path d="M2 5L6 1L10 5Z" fill="#fff" /></svg>
            <svg width="16" height="14" viewBox="0 0 16 14"><path d="M2 4.500H4L8 0V14L4 9.500H2Z" fill="#fff" /><path d="M10 5Q11.500 7 10 9M12 3.500Q14.500 7 12 10.500M13.500 2Q16.500 7 13.500 12" fill="none" stroke="#dce8f4" /></svg>
            <svg width="17" height="16" viewBox="-1 0 17 16"><circle cx="8" cy="8" r="8" fill="#f99b10" /><path d="M4.200 9.500A4 4 0 1 1 11.500 8.500V12" fill="none" stroke="#fff" strokeWidth="2" /><circle cx="8" cy="9.500" r="1.900" fill="none" stroke="#fff" strokeWidth="1.500" /></svg>
            <svg width="16" height="13" viewBox="0 0 16 13"><path d="M1 10H3V12H1ZM4 8.500H6V12H4ZM7 6.500H9V12H7ZM10 4H12V12H10ZM13 1H15V12H13Z" fill="#fff" /></svg>
          </TrayIcons>
          <Clock>05:09 p.m.<br />13/09/2016</Clock>
          <ShowDesktop />
        </Tray>
      </Taskbar>
    </Screen>
  );
}
